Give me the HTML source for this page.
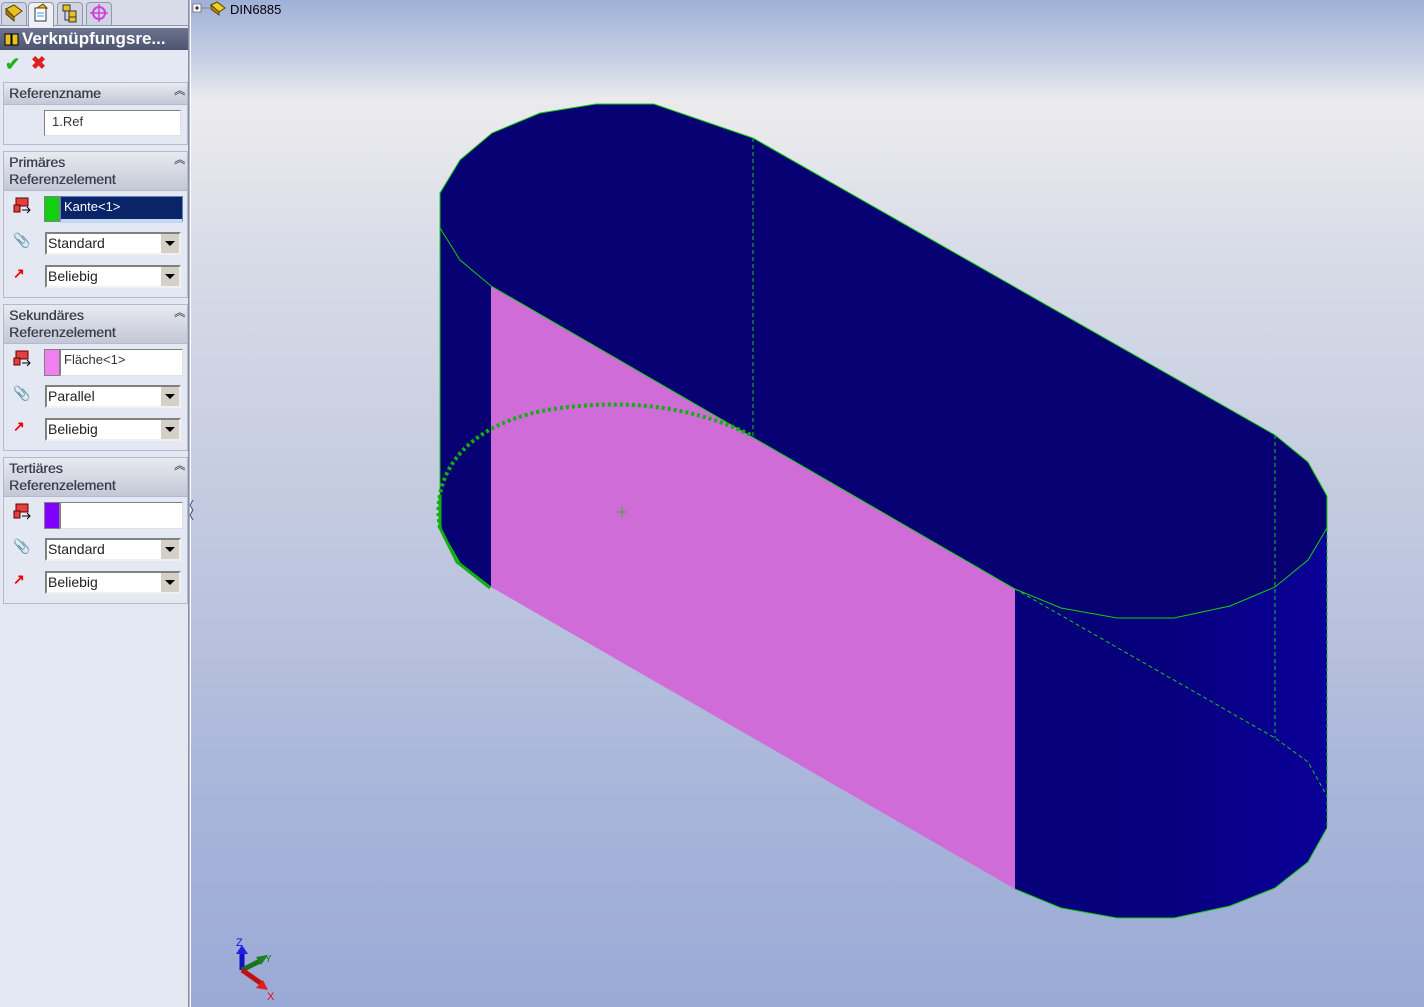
<!DOCTYPE html>
<html><head><meta charset="utf-8"><style>
*{margin:0;padding:0;box-sizing:border-box}
body{width:1424px;height:1007px;overflow:hidden;position:relative;font-family:"Liberation Sans",sans-serif;font-size:13px;color:#000;background:#fff}
#left{position:absolute;left:0;top:0;width:188px;height:1007px;background:#e4e8f2}
#sep{position:absolute;left:188px;top:0;width:3px;height:1007px;background:#b0b6c8;border-left:1px solid #8890a8;border-right:1px solid #fff}
#view{position:absolute;left:191px;top:0;width:1233px;height:1007px;background:linear-gradient(to bottom,#9fb0d8 0px,#c8d0e4 60px,#ebebee 100px,#e8e8ec 140px,#d8dce8 250px,#c4cbe0 500px,#a8b5da 800px,#9aaad6 1007px)}
.tabs{position:absolute;left:0;top:0;width:188px;height:26px;background:#d8dce8;border-bottom:1px solid #9098b0}
.tab{position:absolute;top:2px;width:26px;height:23px;border:1px solid #9098b0;border-bottom:none;border-radius:4px 4px 0 0;background:#d0d4e0}
.title{position:absolute;left:0;top:28px;width:188px;height:22px;background:linear-gradient(#6c7490,#4c5470);color:#fff;font-weight:bold;font-size:17px;line-height:22px;padding-left:22px}
.grp{position:absolute;left:3px;width:185px;border:1px solid #b4bacb;background:#e4e8f2}
.gh{background:linear-gradient(#e8eaf0,#c4c8d6);color:#383e4c;font-size:14px;line-height:17px;padding:2px 5px;border-bottom:1px solid #b4bacb;position:relative;text-shadow:0.4px 0 0 #383e4c}
.gh:after{content:"︽";position:absolute;right:2px;top:0;font-size:11px;color:#404858}
.inp{position:absolute;background:#fff;border:1px solid #808080;border-right-color:#e0e0e0;border-bottom-color:#e0e0e0;font-size:13px;line-height:20px;padding-left:3px;color:#333}
.sel{position:absolute;left:41px;width:136px;height:23px;background:#fff;border:2px solid #808080;border-right-color:#f0f0f0;border-bottom-color:#f0f0f0;font-size:14px;line-height:19px;padding-left:1px;color:#222}
.sel:after{content:"";position:absolute;right:0;top:0;width:18px;height:19px;background:#d4d0c8;border-left:1px solid #fff}
.sel b{position:absolute;right:4px;top:7px;width:0;height:0;border-left:5px solid transparent;border-right:5px solid transparent;border-top:5px solid #000;z-index:2}
.ic{position:absolute;left:9px;font-size:14px}
</style></head><body>
<div id="left">
 <div class="tabs">
  <div class="tab" style="left:1px"><svg width="24" height="20"><path d="M4 6l8-4 8 6-8 6z" fill="#e8c020" stroke="#604000"/><path d="M4 6v5l8 7v-4z" fill="#a08010" stroke="#604000"/></svg></div>
  <div class="tab" style="left:28px;background:#eef0f6;height:25px"><svg width="24" height="20"><rect x="6" y="5" width="11" height="13" fill="#fff" stroke="#333"/><path d="M8 5l6-4 4 4z" fill="#e8c020" stroke="#604000"/><path d="M8 10h7M8 13h7" stroke="#39f"/></svg></div>
  <div class="tab" style="left:57px"><svg width="24" height="20"><rect x="5" y="2" width="7" height="6" fill="#e8c020" stroke="#333"/><rect x="11" y="8" width="7" height="6" fill="#e8c020" stroke="#333"/><rect x="11" y="14" width="7" height="5" fill="#e8c020" stroke="#333"/><path d="M7 8v9h4" stroke="#333" fill="none"/></svg></div>
  <div class="tab" style="left:86px"><svg width="24" height="20"><circle cx="12" cy="10" r="6" fill="none" stroke="#d040e0" stroke-width="2"/><path d="M12 1v18M3 10h18" stroke="#d040e0" stroke-width="1.5"/></svg></div>
 </div>
 <div class="title"><svg style="position:absolute;left:3px;top:3px" width="18" height="16"><rect x="2" y="3" width="6" height="11" fill="#e8c020" stroke="#000"/><rect x="9" y="3" width="6" height="11" fill="#e8c020" stroke="#000"/></svg>Verknüpfungsre...</div>
 <div style="position:absolute;left:5px;top:54px;color:#20b020;font-size:18px;font-weight:bold">✔</div>
 <div style="position:absolute;left:31px;top:53px;color:#e02020;font-size:18px;font-weight:bold">✖</div>

 <div class="grp" style="top:82px;height:63px">
  <div class="gh">Referenzname</div>
  <div class="inp" style="left:40px;top:27px;width:137px;height:26px;line-height:22px;padding-left:7px">1.Ref</div>
 </div>

 <div class="grp" style="top:151px;height:147px">
  <div class="gh">Primäres<br>Referenzelement</div>
  <div class="ic" style="top:44px"><svg width="20" height="20"><rect x="3" y="2" width="12" height="8" fill="#e04040" stroke="#600"/><rect x="1" y="9" width="6" height="7" fill="#e04040" stroke="#600"/><path d="M9 14h8M14 11l3 3-3 3" stroke="#000" fill="none"/></svg></div>
  <div style="position:absolute;left:40px;top:44px;width:16px;height:26px;background:#10d010;border:1px solid #808080"></div>
  <div class="inp" style="left:56px;top:44px;width:123px;height:27px;background:#0a2468;color:#fff;border:1px solid #6080c0;border-bottom:4px solid #c0d8f0">Kante&lt;1&gt;</div>
  <div class="ic" style="top:80px">📎</div>
  <div class="sel" style="top:80px">Standard<b></b></div>
  <div class="ic" style="top:113px;color:#e00;font-weight:bold">↗</div>
  <div class="sel" style="top:113px">Beliebig<b></b></div>
 </div>

 <div class="grp" style="top:304px;height:147px">
  <div class="gh">Sekundäres<br>Referenzelement</div>
  <div class="ic" style="top:44px"><svg width="20" height="20"><rect x="3" y="2" width="12" height="8" fill="#e04040" stroke="#600"/><rect x="1" y="9" width="6" height="7" fill="#e04040" stroke="#600"/><path d="M9 14h8M14 11l3 3-3 3" stroke="#000" fill="none"/></svg></div>
  <div style="position:absolute;left:40px;top:44px;width:16px;height:27px;background:#f080f0;border:1px solid #808080"></div>
  <div class="inp" style="left:56px;top:44px;width:123px;height:27px">Fläche&lt;1&gt;</div>
  <div class="ic" style="top:80px">📎</div>
  <div class="sel" style="top:80px">Parallel<b></b></div>
  <div class="ic" style="top:113px;color:#e00;font-weight:bold">↗</div>
  <div class="sel" style="top:113px">Beliebig<b></b></div>
 </div>

 <div class="grp" style="top:457px;height:147px">
  <div class="gh">Tertiäres<br>Referenzelement</div>
  <div class="ic" style="top:44px"><svg width="20" height="20"><rect x="3" y="2" width="12" height="8" fill="#e04040" stroke="#600"/><rect x="1" y="9" width="6" height="7" fill="#e04040" stroke="#600"/><path d="M9 14h8M14 11l3 3-3 3" stroke="#000" fill="none"/></svg></div>
  <div style="position:absolute;left:40px;top:44px;width:16px;height:27px;background:#8000ff;border:1px solid #808080"></div>
  <div class="inp" style="left:56px;top:44px;width:123px;height:27px"></div>
  <div class="ic" style="top:80px">📎</div>
  <div class="sel" style="top:80px">Standard<b></b></div>
  <div class="ic" style="top:113px;color:#e00;font-weight:bold">↗</div>
  <div class="sel" style="top:113px">Beliebig<b></b></div>
 </div>
</div>
<div id="sep"></div>
<div id="view"></div>
<svg style="position:absolute;left:0;top:0" width="1424" height="1007">
 <defs><linearGradient id="rg" x1="1015" x2="1327" y1="0" y2="0" gradientUnits="userSpaceOnUse"><stop offset="0" stop-color="#06007a"/><stop offset="0.45" stop-color="#06007c"/><stop offset="1" stop-color="#0a0098"/></linearGradient></defs>
 <rect x="193" y="4" width="8" height="8" fill="#fff" stroke="#808080"/><path d="M195 8h4M197 6v4" stroke="#000"/>
 <path d="M201 8h8" stroke="#808080"/>
 <path d="M211 5l6-3 8 6-6 4z" fill="#f0d020" stroke="#604000"/><path d="M211 5v4l8 6v-3z" fill="#b09010" stroke="#604000"/>
 <text x="230" y="14" font-family="Liberation Sans" font-size="13" fill="#000">DIN6885</text>
 <g stroke="#10d010" stroke-width="1">
 <polygon points="1015,589 1061,608 1117,618 1174,618 1230,606 1275,587 1308,560 1327,528 1327,828 1308,862 1275,888 1230,906 1174,918 1117,918 1061,908 1015,889" fill="url(#rg)" stroke="none"/>
 <polygon points="440,228 460,260 491,286 491,587 460,563 440,528" fill="#070072" stroke="none"/>
 <polygon points="491,286 1015,589 1015,889 491,587" fill="#d06cd8" stroke="none"/>
 <polygon points="440,193 460,160 492,133 540,113 596,104 654,104 753,138 1275,435 1308,462 1327,496 1327,528 1308,560 1275,587 1230,606 1174,618 1117,618 1061,608 1015,589 491,286 460,260 440,228" fill="#070072"/>
 <path d="M1327,828 1308,862 1275,888 1230,906 1174,918 1117,918 1061,908 1015,889" fill="none"/>
 <path d="M440,193 440,528 460,563 491,587" fill="none"/>
 </g>
 <g stroke="#20c020" stroke-width="1" stroke-dasharray="4,3" fill="none">
  <path d="M753,138 V436"/><path d="M1275,435 V738"/><path d="M1327,528 V828"/>
  <path d="M1015,589 L1275,738 1308,762 1327,796"/>
 </g>
 <path d="M440,528 C430,470 470,420 560,408 C640,398 700,410 753,436" fill="none" stroke="#10b010" stroke-width="4" stroke-dasharray="3,3"/>
 <path d="M440,495 V528 L457,562 490,588" fill="none" stroke="#10b010" stroke-width="3"/>
 <path d="M617,512h10M622,507v10" stroke="#20c020"/>
 <path d="M242,970 V952" stroke="#1010c0" stroke-width="5"/><path d="M236,954 l6,-9 6,9z" fill="#2020e0"/>
 <path d="M242,970 L262,960" stroke="#1a7020" stroke-width="5"/><path d="M256,957 l12,-2 -7,10z" fill="#208020"/>
 <path d="M242,970 L262,984" stroke="#c01010" stroke-width="5"/><path d="M256,988 l12,2 -5,-10z" fill="#e02020"/>
 <text x="236" y="946" font-size="11" fill="#1010e0" font-family="Liberation Sans">Z</text>
 <text x="265" y="962" font-size="10" fill="#108010" font-family="Liberation Sans">Y</text>
 <text x="267" y="1000" font-size="11" fill="#e01010" font-family="Liberation Sans">X</text>
 <path d="M193,500 l-3,5 3,5 M193,510 l-3,5 3,5" stroke="#405080" fill="none"/>
</svg>
</body></html>
